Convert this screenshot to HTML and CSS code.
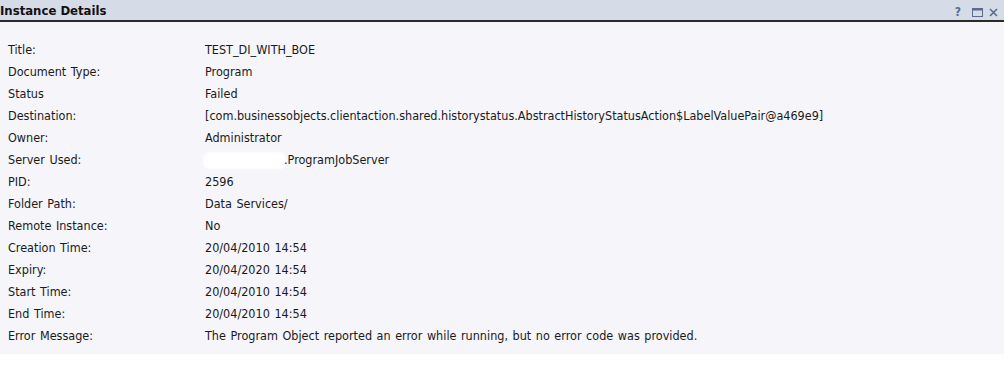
FILE: index.html
```html
<!DOCTYPE html>
<html>
<head>
<meta charset="utf-8">
<link rel="stylesheet" href="styles.css">
</head>
<body>
<div class="panel">
  <div class="header">
    <span class="title">Instance Details</span>
    <span class="tools">
      <span class="help">?</span>
      <svg class="ico" width="11" height="9" viewBox="0 0 11 9"><rect x="0.5" y="0.5" width="10" height="8" fill="none" stroke="#5b6b8c" stroke-width="1"/><line x1="0" y1="1.5" x2="11" y2="1.5" stroke="#5b6b8c" stroke-width="2"/></svg>
      <svg class="ico" width="9" height="9" viewBox="0 0 9 9"><path d="M1 1 L8 8 M8 1 L1 8" stroke="#5b6b8c" stroke-width="1.6" fill="none"/></svg>
    </span>
  </div>
  <div class="body">
    <div class="grid">
      <div class="lbl">Title:</div><div class="val">TEST_DI_WITH_BOE</div>
      <div class="lbl">Document Type:</div><div class="val">Program</div>
      <div class="lbl">Status</div><div class="val">Failed</div>
      <div class="lbl">Destination:</div><div class="val">[com.businessobjects.clientaction.shared.historystatus.AbstractHistoryStatusAction$LabelValuePair@a469e9]</div>
      <div class="lbl">Owner:</div><div class="val">Administrator</div>
      <div class="lbl">Server Used:</div><div class="val"><span class="redact"></span>.ProgramJobServer</div>
      <div class="lbl">PID:</div><div class="val">2596</div>
      <div class="lbl">Folder Path:</div><div class="val">Data Services/</div>
      <div class="lbl">Remote Instance:</div><div class="val">No</div>
      <div class="lbl">Creation Time:</div><div class="val">20/04/2010 14:54</div>
      <div class="lbl">Expiry:</div><div class="val">20/04/2020 14:54</div>
      <div class="lbl">Start Time:</div><div class="val">20/04/2010 14:54</div>
      <div class="lbl">End Time:</div><div class="val">20/04/2010 14:54</div>
      <div class="lbl">Error Message:</div><div class="val">The Program Object reported an error while running, but no error code was provided.</div>
    </div>
  </div>
</div>
</body>
</html>
```
FILE: styles.css
```css
html, body {
  margin: 0;
  padding: 0;
  background: #ffffff;
}
body {
  font-family: "DejaVu Sans Condensed", "DejaVu Sans", sans-serif;
  font-size: 12.5px;
  word-spacing: 1px;
  color: #1a1a1a;
}
.panel {
  width: 1004px;
}
.header {
  height: 20px;
  background: #d5dbe7;
  border-bottom: 2px solid #2a2a2a;
  display: flex;
  align-items: center;
  justify-content: space-between;
}
.title {
  font-weight: bold;
  font-size: 13px;
  word-spacing: 0;
  color: #111;
}
.tools {
  display: flex;
  align-items: center;
  gap: 6px;
  padding-right: 6px;
  padding-top: 4px;
}
.help {
  font-weight: bold;
  font-size: 12px;
  color: #5b6b8c;
  margin-right: 5px;
}
.ico {
  display: block;
}
.body {
  background: #f5f5fa;
  padding: 16px 0 8px 8px;
}
.grid {
  display: grid;
  grid-template-columns: 197px 1fr;
  grid-auto-rows: 22px;
  align-items: center;
}
.redact {
  display: inline-block;
  width: 79px;
  height: 13px;
  vertical-align: -3px;
  background: #ffffff;
  box-shadow: 0 0 3px 2px #ffffff;
  border-radius: 4px;
}
```
